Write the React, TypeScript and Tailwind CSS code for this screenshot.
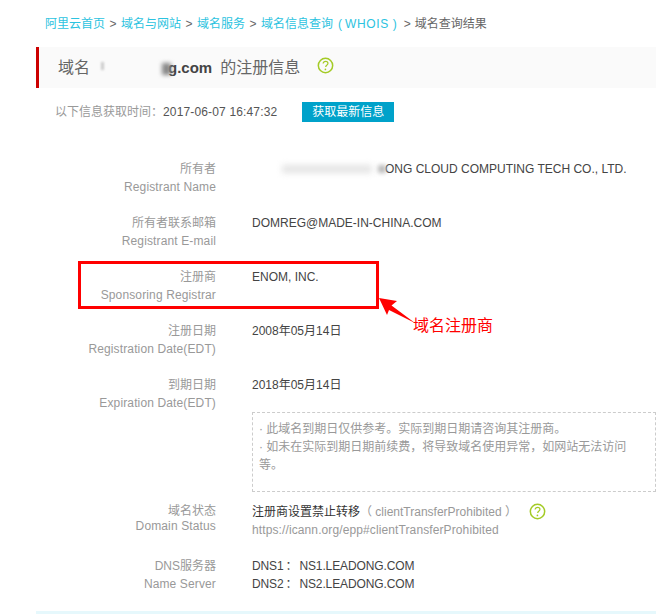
const font = { fontFamily: '"Liberation Sans", "Noto Sans CJK SC", sans-serif' };

const Help = ({ className }: { className: string }) => (
  <svg viewBox="0 0 18 18" className={className} fill="none">
    <circle cx="9" cy="9" r="7.6" stroke="#a4cb26" strokeWidth="1.6" />
    <path d="M6.5 7c0-1.5 1.1-2.4 2.6-2.4s2.5.9 2.5 2.1c0 1-.6 1.5-1.3 2-.7.5-1.1 1-1.1 2" stroke="#a4cb26" strokeWidth="1.3" />
    <circle cx="8.9" cy="13.2" r=".9" fill="#a4cb26" />
  </svg>
);

const Row = ({ cn, en, children }: { cn: string; en: string; children: React.ReactNode }) => (
  <div className="flex mb-[18px]">
    <div className="w-[180px] text-right text-[#999] leading-[18px] shrink-0">
      <div>{cn}</div>
      <div className="tracking-[0.13px]">{en}</div>
    </div>
    <div className="ml-[36px] flex-1 min-w-0 text-[#444] leading-[18px]">{children}</div>
  </div>
);

export default function App() {
  return (
    <div style={font} className="relative w-[664px] h-[614px] overflow-hidden bg-white text-xs">
      <div className="h-[47px] pl-[45px] pt-[16px] leading-[16px] text-[#2cc3e0] flex items-start whitespace-nowrap">
        <span>阿里云首页</span>
        <span className="text-[#666] mx-[4.5px]">&gt;</span>
        <span>域名与网站</span>
        <span className="text-[#666] mx-[4.5px]">&gt;</span>
        <span>域名服务</span>
        <span className="text-[#666] mx-[4.5px]">&gt;</span>
        <span>域名信息查询</span>
        <span className="ml-[5px]">(</span>
        <span className="ml-[3px] tracking-[0.6px]">WHOIS</span>
        <span className="ml-[4px]">)</span>
        <span className="text-[#666] ml-[7px] mr-[4px]">&gt;</span>
        <span className="text-[#666]">域名查询结果</span>
      </div>

      <div className="ml-[36px] mr-[8px] h-[41px] bg-[#fafafa] border-l-[3px] border-[#cc0000] pl-[19px] flex items-center text-[16px] text-[#666]">
        <span>域名</span>
        <span className="ml-[11px] w-[3px] h-[8px] bg-[#ccc] blur-[1px] -mt-[4px]" />
        <span className="ml-[58px] w-[9px] h-[12px] bg-[#888] blur-[2px] mt-[2px] -mr-[3px]" />
        <span className="font-bold text-[15px] text-[#444]">g.com</span>
        <span className="ml-[8px]">的注册信息</span>
        <Help className="ml-[17px] w-[17px] h-[17px] -mt-[5px]" />
      </div>

      <div className="ml-[55px] mt-[14px] h-[20px] flex items-center text-[#999]">
        <span>以下信息获取时间：</span>
        <span className="text-[#555] tracking-[0.15px]">2017-06-07 16:47:32</span>
        <button className="ml-[25px] w-[92px] h-[20px] bg-[#00a2ca] text-white text-center leading-[20px]">获取最新信息</button>
      </div>

      <div className="ml-[36px] mt-[38px]">
        <Row cn="所有者" en="Registrant Name">
          <div className="flex items-center">
            <span className="ml-[30px] w-[90px] h-[8px] bg-[#e4e4e4] blur-[3px]" />
            <span className="w-[8px] h-[8px] bg-[#bbb] blur-[2px] ml-[6px] -mr-[1px]" />
            <span>ONG CLOUD COMPUTING TECH CO., LTD.</span>
          </div>
        </Row>
        <Row cn="所有者联系邮箱" en="Registrant E-mail">DOMREG@MADE-IN-CHINA.COM</Row>
        <Row cn="注册商" en="Sponsoring Registrar">ENOM, INC.</Row>
        <Row cn="注册日期" en="Registration Date(EDT)">2008年05月14日</Row>
        <div className="flex mb-[11px]">
          <div className="w-[180px] text-right text-[#999] leading-[18px] shrink-0">
            <div>到期日期</div>
            <div className="tracking-[0.13px]">Expiration Date(EDT)</div>
          </div>
          <div className="ml-[36px] flex-1 min-w-0 leading-[18px]">
            <div className="text-[#444]">2018年05月14日</div>
            <div className="mt-[18px] border border-dashed border-[#ccc] pl-[6px] pr-[25px] py-[7px] text-[#999] h-[80px] w-[404px]">
              <div>· 此域名到期日仅供参考。实际到期日期请咨询其注册商。</div>
              <div>· 如未在实际到期日期前续费，将导致域名使用异常，如网站无法访问等。</div>
            </div>
          </div>
        </div>
        <div className="flex mb-[18px]">
          <div className="w-[180px] text-right text-[#999] leading-[15px] pt-[1px] shrink-0">
            <div>域名状态</div>
            <div className="tracking-[0.13px]">Domain Status</div>
          </div>
          <div className="ml-[36px] flex-1 leading-[18px] text-[#999]">
            <div className="flex items-center">
              <span className="text-[#333]">注册商设置禁止转移</span>
              <span>（ clientTransferProhibited ）</span>
              <Help className="ml-[12px] w-[17px] h-[17px] -mt-[2px]" />
            </div>
            <div className="tracking-[0.11px]">https://icann.org/epp#clientTransferProhibited</div>
          </div>
        </div>
        <Row cn="DNS服务器" en="Name Server">
          <div className="tracking-[-0.12px]">DNS1<span className="mx-[2px]">：</span>NS1.LEADONG.COM</div>
          <div className="tracking-[-0.12px]">DNS2<span className="mx-[2px]">：</span>NS2.LEADONG.COM</div>
        </Row>
      </div>

      <div className="absolute left-[36px] right-[8px] top-[611px] h-[3px] bg-[#e6f8fc]" />

      <div className="absolute left-[78px] top-[261px] w-[301px] h-[48px] border-[3px] border-[#ff0000]" />
      <svg className="absolute left-[376px] top-[296px]" width="44" height="36" viewBox="0 0 44 36">
        <path d="M3 2 L21 5 L15.5 9.5 L39 27 L13 14 L11 19 Z" fill="#ff0000" />
      </svg>
      <span className="absolute left-[413px] top-[316px] text-[16px] leading-[20px] text-[#ff0000]">域名注册商</span>
    </div>
  );
}
